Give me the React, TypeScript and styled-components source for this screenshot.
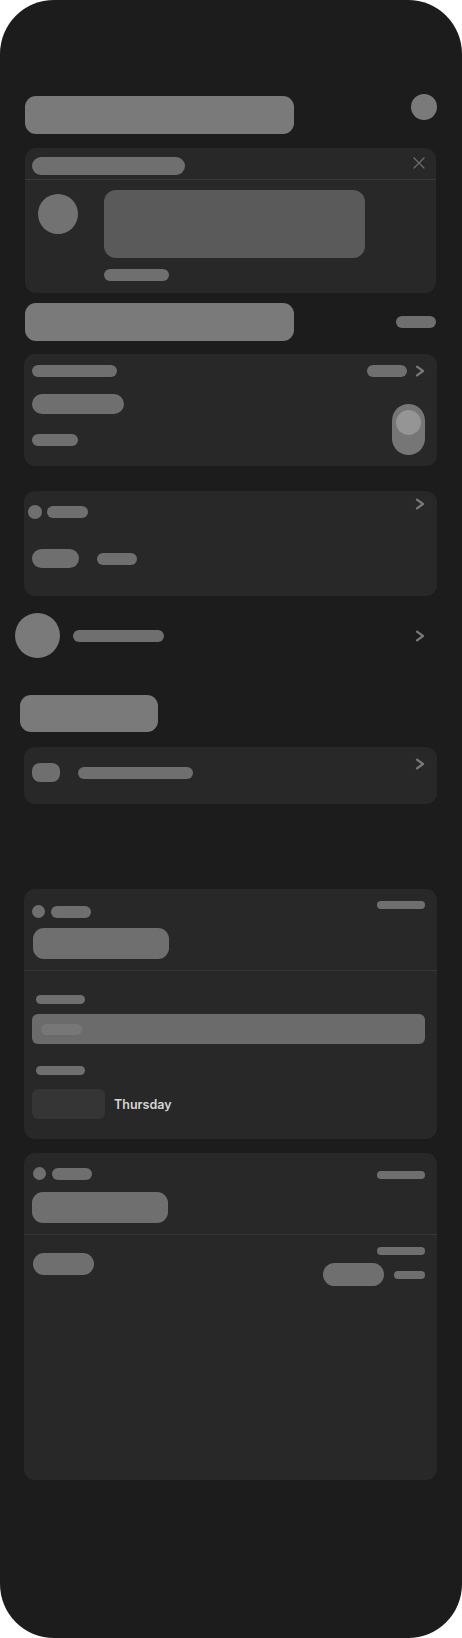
import React from 'react';
import styled, { createGlobalStyle } from 'styled-components';

const GlobalStyle = createGlobalStyle`
  * { box-sizing: border-box; }
  html, body { margin: 0; padding: 0; background: #ffffff; }
  body { font-family: Inter, "Noto Sans", "Liberation Sans", sans-serif; }
`;

const Frame = styled.div`
  width: 462px;
  height: 1638px;
  border-radius: 54px;
  background: #1c1c1c;
  overflow: hidden;
  padding: 94px 26px 0 25px;
  display: flex;
  flex-direction: column;
`;

// generic skeleton bone, size and tone vary per use
const Bone = styled.div<{ $w: number; $h: number; $r?: number; $tone?: string }>`
  flex: none;
  width: ${p => p.$w}px;
  height: ${p => p.$h}px;
  border-radius: ${p => (p.$r !== undefined ? p.$r : p.$h / 2)}px;
  background: ${p => p.$tone || '#6f6f6f'};
`;

const Dot = styled.div<{ $size: number; $tone?: string }>`
  flex: none;
  width: ${p => p.$size}px;
  height: ${p => p.$size}px;
  border-radius: 50%;
  background: ${p => p.$tone || '#6f6f6f'};
`;

const TitleRow = styled.div<{ $top?: number; $align?: string }>`
  display: flex;
  justify-content: space-between;
  align-items: ${p => p.$align || 'center'};
  margin-top: ${p => p.$top || 0}px;
`;

const TitleBone = styled.div<{ $offset?: number }>`
  width: 269px;
  height: 38px;
  border-radius: 11px;
  background: #7a7a7a;
  margin-top: ${p => p.$offset || 0}px;
`;

const HeadDot = styled(Dot)`
  margin-right: -1px;
`;

const Card = styled.div<{ $top: number; $h: number; $bleed?: boolean }>`
  margin-top: ${p => p.$top}px;
  margin-left: ${p => (p.$bleed ? -1 : 0)}px;
  margin-right: ${p => (p.$bleed ? -1 : 0)}px;
  height: ${p => p.$h}px;
  background: #282828;
  border-radius: 11px;
  display: flex;
  flex-direction: column;
  overflow: hidden;
`;

/* notice card */
const NoticeHead = styled.div`
  height: 32px;
  padding: 9px 11px 0 7px;
  display: flex;
  justify-content: space-between;
  align-items: flex-start;
  border-bottom: 1px solid #3a3a3a;
`;

const NoticeBody = styled.div`
  display: flex;
  padding: 10px 13px 0 13px;
  gap: 26px;
`;

const Avatar = styled(Dot)`
  margin-top: 4px;
`;

const Column = styled.div<{ $gap?: number; $align?: string }>`
  display: flex;
  flex-direction: column;
  gap: ${p => p.$gap || 0}px;
  align-items: ${p => p.$align || 'flex-start'};
`;

/* settings cards */
const CardInner = styled.div<{ $pt: number; $pl?: number; $pr?: number }>`
  padding: ${p => p.$pt}px ${p => (p.$pr !== undefined ? p.$pr : 12)}px 0 ${p => (p.$pl !== undefined ? p.$pl : 8)}px;
  display: flex;
  flex-direction: column;
`;

const Row = styled.div<{ $gap?: number; $align?: string; $top?: number; $left?: number }>`
  display: flex;
  align-items: ${p => p.$align || 'center'};
  gap: ${p => p.$gap || 0}px;
  margin-top: ${p => p.$top || 0}px;
  margin-left: ${p => p.$left || 0}px;
`;

const Spread = styled(Row)`
  justify-content: space-between;
`;

const Toggle = styled.div`
  width: 33px;
  height: 51px;
  margin-top: 10px;
  border-radius: 17px;
  background: #767676;
  padding: 6px 4px 0 4px;
`;

const Knob = styled.div`
  width: 25px;
  height: 25px;
  border-radius: 50%;
  background: #959595;
`;

const Chevron = styled.svg<{ $top?: number }>`
  flex: none;
  width: 10px;
  height: 12px;
  margin-top: ${p => p.$top || 0}px;
`;

const Gap = styled.div<{ $h: number }>`
  flex: none;
  height: ${p => p.$h}px;
`;

const ProfileRow = styled.div`
  margin-top: 17px;
  margin-left: -10px;
  margin-right: 11px;
  display: flex;
  align-items: center;
  gap: 13px;
`;

const ActionBone = styled.div`
  margin-top: 37px;
  margin-left: -5px;
  width: 138px;
  height: 37px;
  border-radius: 11px;
  background: #7a7a7a;
`;

const Fill = styled.div`
  flex: 1;
`;

/* form cards */
const FormHead = styled.div<{ $pt: number }>`
  padding: ${p => p.$pt}px 12px 11px 8px;
  border-bottom: 1px solid #363636;
  display: flex;
  flex-direction: column;
`;

const FormBody = styled.div<{ $pt: number }>`
  padding: ${p => p.$pt}px 12px 0 8px;
  display: flex;
  flex-direction: column;
`;

const FieldLabel = styled(Bone)<{ $top: number }>`
  margin-top: ${p => p.$top}px;
  margin-left: 4px;
`;

const InputBone = styled.div`
  margin-top: 10px;
  height: 30px;
  border-radius: 6px;
  background: #6b6b6b;
  padding-left: 9px;
  display: flex;
  align-items: center;
`;

const DayRow = styled.div`
  margin-top: 14px;
  display: flex;
  align-items: center;
  gap: 9px;
`;

const DayBox = styled.div`
  width: 73px;
  height: 30px;
  border-radius: 6px;
  background: #353535;
`;

const DayText = styled.span`
  font-family: Inter, "Noto Sans", "Liberation Sans", sans-serif;
  font-size: 12.5px;
  font-weight: 600;
  color: #d6d6d6;
  letter-spacing: 0;
`;

const ChevronIcon: React.FC<{ top?: number }> = ({ top }) => (
  <Chevron $top={top} viewBox="0 0 10 12">
    <path d="M2 1.6 L8 6 L2 10.4" fill="none" stroke="#787878" strokeWidth="2.3" strokeLinecap="round" strokeLinejoin="round" />
  </Chevron>
);

const CloseIcon = () => (
  <svg width="12" height="12" viewBox="0 0 12 12" style={{ flex: 'none' }}>
    <path d="M1 1 L11 11 M11 1 L1 11" stroke="#6c6c6c" strokeWidth="1.3" strokeLinecap="round" />
  </svg>
);

export default function App() {
  return (
    <>
      <GlobalStyle />
      <Frame>
        <TitleRow $align="flex-start">
          <TitleBone $offset={2} />
          <HeadDot $size={26} $tone="#7a7a7a" />
        </TitleRow>

        <Card $top={14} $h={145}>
          <NoticeHead>
            <Bone $w={153} $h={18} />
            <CloseIcon />
          </NoticeHead>
          <NoticeBody>
            <Avatar $size={40} $tone="#727272" />
            <Column $gap={11}>
              <Bone $w={261} $h={68} $r={12} $tone="#5a5a5a" />
              <Bone $w={65} $h={12} />
            </Column>
          </NoticeBody>
        </Card>

        <TitleRow $top={10}>
          <TitleBone />
          <Bone $w={40} $h={12} />
        </TitleRow>

        <Card $top={13} $h={112} $bleed>
          <CardInner $pt={11}>
            <Spread>
              <Bone $w={85} $h={12} />
              <Row $gap={8}>
                <Bone $w={40} $h={12} />
                <ChevronIcon />
              </Row>
            </Spread>
            <Spread $align="flex-start" $top={17}>
              <Column>
                <Bone $w={92} $h={20} />
                <Gap $h={20} />
                <Bone $w={46} $h={12} />
              </Column>
              <Toggle>
                <Knob />
              </Toggle>
            </Spread>
          </CardInner>
        </Card>

        <Card $top={25} $h={105} $bleed>
          <CardInner $pt={7} $pl={4}>
            <Spread $align="flex-start">
              <Row $gap={5} $top={7}>
                <Dot $size={14} />
                <Bone $w={41} $h={12} />
              </Row>
              <ChevronIcon />
            </Spread>
            <Row $gap={18} $top={30} $left={4}>
              <Bone $w={47} $h={19} />
              <Bone $w={40} $h={12} />
            </Row>
          </CardInner>
        </Card>

        <ProfileRow>
          <Dot $size={45} $tone="#7a7a7a" />
          <Bone $w={91} $h={12} />
          <Fill />
          <ChevronIcon />
        </ProfileRow>

        <ActionBone />

        <Card $top={15} $h={57} $bleed>
          <CardInner $pt={11}>
            <Spread $align="flex-start">
              <Row $gap={18} $top={5}>
                <Bone $w={28} $h={19} $r={8} />
                <Bone $w={115} $h={12} />
              </Row>
              <ChevronIcon />
            </Spread>
          </CardInner>
        </Card>

        <Card $top={85} $h={250} $bleed>
          <FormHead $pt={12}>
            <Spread $align="flex-start">
              <Row $gap={6} $top={4}>
                <Dot $size={13} />
                <Bone $w={40} $h={12} />
              </Row>
              <Bone $w={48} $h={8} />
            </Spread>
            <Row $top={10} $left={1}>
              <Bone $w={136} $h={31} $r={11} />
            </Row>
          </FormHead>
          <FormBody $pt={24}>
            <FieldLabel $w={49} $h={9} $top={0} />
            <InputBone>
              <Bone $w={41} $h={11} $tone="#777777" />
            </InputBone>
            <FieldLabel $w={49} $h={9} $top={22} />
            <DayRow>
              <DayBox />
              <DayText>Thursday</DayText>
            </DayRow>
          </FormBody>
        </Card>

        <Card $top={14} $h={327} $bleed>
          <FormHead $pt={14}>
            <Spread $align="flex-start">
              <Row $gap={6} $left={1}>
                <Dot $size={13} />
                <Bone $w={40} $h={12} />
              </Row>
              <Row $top={4}>
                <Bone $w={48} $h={8} />
              </Row>
            </Spread>
            <Row $top={12}>
              <Bone $w={136} $h={31} $r={11} />
            </Row>
          </FormHead>
          <FormBody $pt={12}>
            <Spread $align="flex-start">
              <Row $top={6} $left={1}>
                <Bone $w={61} $h={22} />
              </Row>
              <Column $align="flex-end" $gap={8}>
                <Bone $w={48} $h={8} />
                <Row $gap={10}>
                  <Bone $w={61} $h={23} />
                  <Bone $w={31} $h={8} />
                </Row>
              </Column>
            </Spread>
          </FormBody>
        </Card>
      </Frame>
    </>
  );
}
